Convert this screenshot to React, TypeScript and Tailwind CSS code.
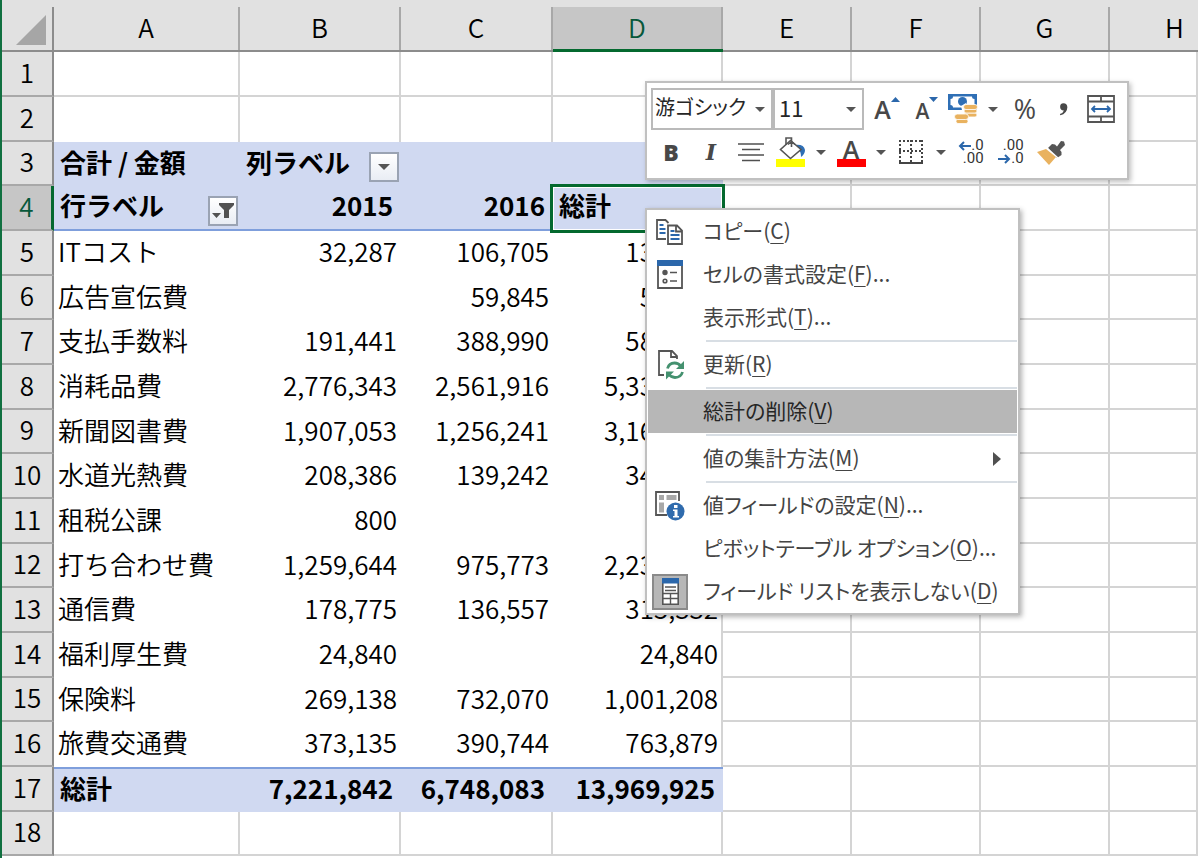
import React from "react";

type Row = { n: number; a?: string; b?: string; c?: string; d?: string; kind?: "head" | "foot" };

const rows: Row[] = [
  { n: 1 },
  { n: 2 },
  { n: 3, a: "合計 / 金額", b: "列ラベル", kind: "head" },
  { n: 4, a: "行ラベル", b: "2015", c: "2016", d: "総計", kind: "head" },
  { n: 5, a: "ITコスト", b: "32,287", c: "106,705", d: "138,992" },
  { n: 6, a: "広告宣伝費", c: "59,845", d: "59,845" },
  { n: 7, a: "支払手数料", b: "191,441", c: "388,990", d: "580,431" },
  { n: 8, a: "消耗品費", b: "2,776,343", c: "2,561,916", d: "5,338,259" },
  { n: 9, a: "新聞図書費", b: "1,907,053", c: "1,256,241", d: "3,163,294" },
  { n: 10, a: "水道光熱費", b: "208,386", c: "139,242", d: "347,628" },
  { n: 11, a: "租税公課", b: "800", d: "800" },
  { n: 12, a: "打ち合わせ費", b: "1,259,644", c: "975,773", d: "2,235,417" },
  { n: 13, a: "通信費", b: "178,775", c: "136,557", d: "315,332" },
  { n: 14, a: "福利厚生費", b: "24,840", d: "24,840" },
  { n: 15, a: "保険料", b: "269,138", c: "732,070", d: "1,001,208" },
  { n: 16, a: "旅費交通費", b: "373,135", c: "390,744", d: "763,879" },
  { n: 17, a: "総計", b: "7,221,842", c: "6,748,083", d: "13,969,925", kind: "foot" },
  { n: 18 },
];

const columns = ["A", "B", "C", "D", "E", "F", "G", "H"];

function FilterCell({ text, children }: { text: string; children: React.ReactNode }) {
  return (
    <span className="flex h-10 items-center justify-between">
      <span className="pb-[5px]">{text}</span>
      <button
        aria-label={`${text}のフィルター`}
        className="-mr-1.5 mb-[2px] flex size-[30px] items-center justify-center self-end border-2 border-[#9aa3b3] bg-gradient-to-b from-white to-[#e9edf4]"
      >
        {children}
      </button>
    </span>
  );
}

function PivotCell({ row, col }: { row: Row; col: "a" | "b" | "c" | "d" }) {
  const text = row[col];
  const blank = row.n < 3 || row.n > 17;
  const left = col === "a" || row.n === 3 || (row.n === 4 && col === "d");
  const selected = row.n === 4 && col === "d";
  const columnFilter = row.n === 3 && col === "b";
  const rowFilter = row.n === 4 && col === "a";
  let style = "whitespace-nowrap pt-0 ";
  style += columnFilter || rowFilter ? "pb-0 " : "pb-[5px] ";
  if (blank) style += row.n === 2 ? "border-r-2 border-[#d4d4d4] " : "border-r-2 border-b-2 border-[#d4d4d4] ";
  else if (row.kind) style += "bg-[#d0d9f1] font-bold ";
  else if (col === "d") style += "border-r-2 border-[#d4d4d4] ";
  if (row.n === 4) style += "border-b-2 border-b-[#7f9fdc] ";
  if (row.n === 17) style += "border-t-2 border-t-[#7f9fdc] ";
  style += left ? "text-left " : "text-right ";
  style += row.kind ? "pl-1.5 pr-2 " : col === "d" ? "pl-1 pr-[3px] " : "px-1 ";
  if (selected) style += "relative ";
  return (
    <td className={style}>
      {selected && (
        <span className="absolute -top-[2px] -right-[2px] -bottom-[4px] -left-[3px] border-[3px] border-[#04692f] outline-1 -outline-offset-4 outline-white" />
      )}
      {columnFilter && (
        <FilterCell text="列ラベル">
          <Caret size={12} />
        </FilterCell>
      )}
      {rowFilter && (
        <FilterCell text="行ラベル">
          <svg width="22" height="18" viewBox="0 0 22 18" fill="#525252">
            <path d="M7 1h15v2l-5 5v8h-5V8L7 3zM0 11h9l-4.500 5z" />
          </svg>
        </FilterCell>
      )}
      {!columnFilter && !rowFilter && text}
    </td>
  );
}

function Caret({ size = 10 }: { size?: number }) {
  return (
    <svg width={size} height={size / 2} viewBox="0 0 10 5" fill="#555">
      <path d="M0 0h10L5 5z" />
    </svg>
  );
}

function Sheet() {
  return (
    <table className="w-full table-fixed border-separate border-spacing-0 text-[26px] leading-9 font-[350] text-black">
      <colgroup>
        <col className="w-[52px]" />
        <col className="w-[186px]" />
        <col className="w-[161px]" />
        <col className="w-[152px]" />
        <col className="w-[170px]" />
        <col className="w-[129px]" />
        <col className="w-[129px]" />
        <col className="w-[129px]" />
        <col />
      </colgroup>
      <thead>
        <tr className="h-[52px] bg-[#e1e1e1]">
          <th className="border-b-2 border-[#8c8c8c] p-0 pt-[7px]">
            <div className="flex h-[43px] justify-end border-r-2 border-[#8c8c8c] pt-2 pr-1.5">
              <svg width="30" height="30" viewBox="0 0 30 30">
                <path d="M30 0v30H0z" fill="#a6a6a6" />
              </svg>
            </div>
          </th>
          {columns.map((c) => (
            <th
              key={c}
              scope="col"
              className={
                c === "D"
                  ? "border-b-[3px] border-[#04692f] p-0 pt-[7px] font-[350] text-[#07583a]"
                  : "border-b-2 border-[#8c8c8c] p-0 pt-[7px] font-[350]"
              }
            >
              <div
                className={
                  c === "D"
                    ? "flex h-[42px] items-center justify-center border-r-2 border-[#a8a8a8] bg-[#c6c6c6] pb-[3px]"
                    : c === "H"
                      ? "flex h-[43px] items-center overflow-hidden pb-1 pl-[55px]"
                      : "flex h-[43px] items-center justify-center border-r-2 border-[#a8a8a8] pb-1"
                }
              >
                {c}
              </div>
            </th>
          ))}
        </tr>
      </thead>
      <tbody className="[&>tr]:h-[45px] [&>tr:nth-child(3n)]:h-[44px]">
        {rows.map((row) => (
          <tr key={row.n}>
            <th
              scope="row"
              className={
                row.n === 4
                  ? "border-r-[3px] border-b-2 border-r-[#04692f] border-b-[#a8a8a8] bg-[#c6c6c6] p-0 pb-1 font-[350] text-[#07583a]"
                  : "border-r-2 border-b-2 border-r-[#8c8c8c] border-b-[#a8a8a8] bg-[#e1e1e1] p-0 pb-1 font-[350]"
              }
            >
              {row.n}
            </th>
            <PivotCell row={row} col="a" />
            <PivotCell row={row} col="b" />
            <PivotCell row={row} col="c" />
            <PivotCell row={row} col="d" />
            {["E", "F", "G", "H"].map((c) => (
              <td key={c} className="border-r-2 border-b-2 border-[#d4d4d4] p-0" />
            ))}
          </tr>
        ))}
      </tbody>
    </table>
  );
}

function ToolButton({ label, width = "w-10", children }: { label: string; width?: string; children: React.ReactNode }) {
  return (
    <button aria-label={label} className={`flex h-10 shrink-0 items-center justify-center text-[#484848] ${width}`}>
      {children}
    </button>
  );
}

function MiniToolbar() {
  return (
    <div
      role="toolbar"
      aria-label="ミニ ツールバー"
      className="absolute top-[81px] left-[645px] border-2 border-[#c0c0c0] bg-white pt-[5px] pr-2 pb-1.5 pl-1 shadow-[2px_2px_5px_rgba(0,0,0,0.25)]"
    >
      <div className="flex items-center">
        <label className="relative flex items-center">
          <select aria-label="フォント" className="h-[42px] w-[122px] appearance-none border-2 border-[#bababa] bg-white pb-1 pl-[2px] text-[20px] text-[#262626] [font-feature-settings:'palt']">
            <option>游ゴシック</option>
          </select>
          <span className="pointer-events-none absolute right-2"><Caret /></span>
        </label>
        <label className="relative mr-[3px] flex items-center">
          <select aria-label="フォント サイズ" className="h-[42px] w-[91px] appearance-none border-2 border-[#bababa] bg-white pb-1 pl-1 text-[22px] text-[#262626]">
            <option>11</option>
          </select>
          <span className="pointer-events-none absolute right-2"><Caret /></span>
        </label>
        <ToolButton label="フォント サイズの拡大">
          <span className="font-['Open_Sans'] text-[25px] leading-8 font-semibold">A</span>
          <svg className="mb-5" width="9" height="5" viewBox="0 0 9 5" fill="#2b67ab"><path d="M0 5h9L4.500 0z" /></svg>
        </ToolButton>
        <ToolButton label="フォント サイズの縮小">
          <span className="pt-1 font-['Open_Sans'] text-[21px] leading-8 font-semibold">A</span>
          <svg className="mb-5" width="9" height="5" viewBox="0 0 9 5" fill="#2b67ab"><path d="M0 0h9L4.500 5z" /></svg>
        </ToolButton>
        <ToolButton label="通貨表示形式" width="w-8">
          <svg width="30" height="30" viewBox="0 0 30 30">
            <path d="M0 0h29v16H0z" fill="#2f6fb5" />
            <path d="M5 2.500h19q0 2.500 2.500 2.500v6H18v2.500H5Q5 11 2.500 11V5Q5 5 5 2.500z" fill="#fff" />
            <circle cx="14.500" cy="7.500" r="4.500" fill="#2f6fb5" />
            <path d="M13 12l5-3v7h-4z" fill="#fff" />
            <g fill="#e9b25f" stroke="#fff" strokeWidth=".8">
              <rect x="16" y="19" width="13" height="4" rx="2" />
              <rect x="16" y="15" width="13" height="4" rx="2" />
              <rect x="15.500" y="10.500" width="14" height="5" rx="2.500" />
              <rect x="8" y="25" width="12" height="4.500" rx="2" />
              <rect x="6.500" y="20" width="14" height="5.500" rx="2.700" />
            </g>
          </svg>
        </ToolButton>
        <ToolButton label="通貨の一覧" width="w-7"><Caret /></ToolButton>
        <ToolButton label="パーセント スタイル" width="w-9">
          <span className="font-['Open_Sans'] text-[27px] leading-8 font-medium">%</span>
        </ToolButton>
        <ToolButton label="桁区切りスタイル">
          <svg width="9" height="13" viewBox="0 0 10 14" fill="#484848">
            <path d="M5 0a4 4 0 1 0 .5 8Q4.500 11 1 12l.5 1.500Q9 11.500 9.300 4.500 9 0 5 0z" />
          </svg>
        </ToolButton>
        <ToolButton label="セルを結合して中央揃え" width="w-9">
          <svg width="28" height="28" viewBox="0 0 28 28" fill="none" stroke="#555" strokeWidth="1.800">
            <path d="M1 1h26v26H1zM1 6.500h26M1 21.500h26M14 1v5.500M14 21.500V27" />
            <path d="M5 14h18M8 11l-3 3 3 3M20 11l3 3-3 3" stroke="#2b67ab" />
          </svg>
        </ToolButton>
      </div>
      <div className="mt-[2px] flex items-center">
        <ToolButton label="太字"><span className="font-['Open_Sans'] text-[23px] leading-8 font-extrabold">B</span></ToolButton>
        <ToolButton label="斜体"><span className="font-['DejaVu_Serif'] text-[22px] leading-8 font-bold italic">I</span></ToolButton>
        <ToolButton label="中央揃え">
          <svg width="26" height="20" viewBox="0 0 26 20" stroke="#505050" strokeWidth="1.600"><path d="M0 2h26M4 7.500h18M0 13h26M4 18.500h18" /></svg>
        </ToolButton>
        <ToolButton label="塗りつぶしの色">
          <svg width="30" height="30" viewBox="0 0 30 30">
            <path d="M0 22h29v8H0z" fill="#ff0" />
            <path d="M19 8q9-1 10 5 0 4-4 7 0-5-2-7z" fill="#2f6fb5" />
            <path d="M14.500 3.500L25 12.500 14.500 21.500 4.500 12.500z" fill="#fff" stroke="#555" strokeWidth="1.600" />
            <path d="M10 8V1h5.500v9M12 7.500l3.500-3 3.500 3" fill="none" stroke="#555" strokeWidth="1.600" />
          </svg>
        </ToolButton>
        <ToolButton label="塗りつぶしの色の一覧" width="w-5"><Caret /></ToolButton>
        <ToolButton label="フォントの色">
          <span className="flex flex-col items-center pt-[3px]">
            <span className="font-['Open_Sans'] text-[25px] leading-[18px] font-semibold">A</span>
            <span className="mt-[1px] h-2 w-[29px] bg-[#f00]" />
          </span>
        </ToolButton>
        <ToolButton label="フォントの色の一覧" width="w-5"><Caret /></ToolButton>
        <ToolButton label="罫線">
          <svg width="24" height="24" viewBox="0 0 24 24" fill="none" stroke="#444" strokeWidth="2">
            <path d="M0 1h24M0 11h24M1 0v22M12 0v22M23 0v22" strokeDasharray="2 2" />
            <path d="M0 23h24" />
          </svg>
        </ToolButton>
        <ToolButton label="罫線の一覧" width="w-5"><Caret /></ToolButton>
        <ToolButton label="小数点以下の表示桁数を増やす">
          <span className="flex flex-col items-end font-[Roboto] text-[15px] leading-[13px] text-[#333]">
            <span className="flex items-center">
              <svg width="13" height="10" viewBox="0 0 13 10" fill="none" stroke="#2b67ab" strokeWidth="2"><path d="M13 5H2M6 1L2 5l4 4" /></svg>.0
            </span>
            <span>.00</span>
          </span>
        </ToolButton>
        <ToolButton label="小数点以下の表示桁数を減らす">
          <span className="flex flex-col items-end font-[Roboto] text-[15px] leading-[13px] text-[#333]">
            <span>.00</span>
            <span className="flex items-center">
              <svg width="13" height="10" viewBox="0 0 13 10" fill="none" stroke="#2b67ab" strokeWidth="2"><path d="M0 5h11M7 1l4 4-4 4" /></svg>.0
            </span>
          </span>
        </ToolButton>
        <ToolButton label="書式のコピー/貼り付け">
          <svg width="28" height="25" viewBox="0 0 28 25">
            <path d="M0 12l9-3 10 8-7 8z" fill="#e9b25f" />
            <path d="M11 8l4-4 3 .5 2 2L24 1l3 .5 1 3.500-5 5 1.500 2v3L20 18z" fill="#555" />
            <path d="M10 8l11 10" stroke="#fff" strokeWidth="1.200" />
          </svg>
        </ToolButton>
      </div>
    </div>
  );
}

function CopyIcon() {
  return (
    <svg width="28" height="26" viewBox="0 0 28 26" fill="none" stroke="#555" strokeWidth="1.800">
      <path d="M10 20H1V1h8.500l3 3" />
      <path d="M3.500 6h4M3.500 10h6M3.500 14h6" stroke="#2b67ab" />
      <path d="M12 6.500h9l5 5V25H12zM20 6.500v6h6" fill="#fff" />
      <path d="M14.500 12h4M14.500 16h9M14.500 20h9" stroke="#2b67ab" />
    </svg>
  );
}

function FormatIcon() {
  return (
    <svg width="26" height="30" viewBox="0 0 26 30" fill="none" stroke="#555" strokeWidth="1.800">
      <path d="M1 2h24v26H1z" />
      <path d="M0 0h26v6H0z" fill="#2b67ab" stroke="none" />
      <circle cx="8" cy="12.500" r="1.800" fill="#555" />
      <circle cx="8" cy="21" r="1.800" strokeWidth="1.600" />
      <path d="M13 12.500h7M13 21h7" strokeWidth="1.600" />
    </svg>
  );
}

function RefreshIcon() {
  return (
    <svg width="28" height="30" viewBox="0 0 28 30" fill="none" stroke="#555" strokeWidth="1.800">
      <path d="M8 25H3V1h13l5 5v3M15 1v6h6" />
      <path d="M11.500 18.500q1.500-5.500 7-5.500 4 0 6 3M26.500 22q-1.500 5.500-7.500 5.500-4 0-6.500-3.500" stroke="#44916f" strokeWidth="2.800" />
      <path d="M28 11v8h-8zM10 29.500V21.500H18z" fill="#44916f" stroke="none" />
    </svg>
  );
}

function FieldIcon() {
  return (
    <svg width="30" height="30" viewBox="0 0 30 30">
      <path d="M12 24H1V1h23v9" fill="none" stroke="#555" strokeWidth="1.800" />
      <path d="M4 4h5v5H4zM11.500 4h10v5h-10zM4 11.500h5v10H4z" fill="#a8a8a8" />
      <circle cx="20.500" cy="20.500" r="9" fill="#2f6bad" />
      <path d="M19 14h3.500v3H19zM18 18.500h4.500V25H24v1.500h-6V25h1.500v-5H18z" fill="#fff" />
    </svg>
  );
}

function ListIcon() {
  return (
    <span className="flex size-9 items-center justify-center border-2 border-[#8a8a8a] bg-[#b7b7b7]">
      <svg width="17" height="27" viewBox="0 0 17 27">
        <path d="M.8.8h15.400v25.400H.8z" fill="#fff" stroke="#555" strokeWidth="1.600" />
        <path d="M0 0h17v5.500H0z" fill="#2b67ab" />
        <path d="M3 9h11M3 12.500h11M1 15.500h15M1 20.500h15M8.500 15.500V26" stroke="#555" strokeWidth="1.400" />
      </svg>
    </span>
  );
}

type Item = { text: string; k: string; tail?: string; icon?: React.ReactNode; active?: boolean; sub?: boolean; sep?: boolean };

const items: Item[] = [
  { text: "コピー", k: "C", icon: <CopyIcon /> },
  { text: "セルの書式設定", k: "F", tail: "...", icon: <FormatIcon /> },
  { text: "表示形式", k: "T", tail: "..." },
  { text: "更新", k: "R", icon: <RefreshIcon />, sep: true },
  { text: "総計の削除", k: "V", active: true, sep: true },
  { text: "値の集計方法", k: "M", sub: true, sep: true },
  { text: "値フィールドの設定", k: "N", tail: "...", icon: <FieldIcon />, sep: true },
  { text: "ピボットテーブル オプション", k: "O", tail: "..." },
  { text: "フィールド リストを表示しない", k: "D", icon: <ListIcon /> },
];

function ContextMenu() {
  return (
    <div
      role="menu"
      className="absolute top-[208px] left-[645px] flex w-[375px] flex-col border-2 border-[#c0c0c0] bg-white px-[1px] shadow-[2px_2px_5px_rgba(0,0,0,0.3)]"
    >
      {items.map((it) => (
        <React.Fragment key={it.k}>
          {it.sep && (
            <div role="separator" className="py-[1px] pl-[58px]">
              <div className="h-[2px] bg-[#d8dee4]" />
            </div>
          )}
          <button
            role="menuitem"
            className={`flex h-[43px] items-center text-left text-[21px] whitespace-nowrap [font-feature-settings:'palt'] ${
              it.active ? "bg-[#b7b7b7] text-[#262626]" : "text-[#444]"
            }`}
          >
            <span className="flex w-[55px] shrink-0 items-center pl-1">
              <span className="flex w-9 justify-center">{it.icon}</span>
            </span>
            <span className="flex-1 pb-[1px]">
              {it.text}(<span className="underline decoration-1 underline-offset-4">{it.k}</span>){it.tail}
            </span>
            {it.sub && (
              <svg className="mr-4" width="8" height="14" viewBox="0 0 8 14" fill="#505050"><path d="M0 0l8 7-8 7z" /></svg>
            )}
          </button>
        </React.Fragment>
      ))}
    </div>
  );
}

export default function App() {
  return (
    <main className="relative min-h-screen overflow-hidden border-l-2 border-[#107040] bg-white font-['Noto_Sans_CJK_JP',sans-serif]">
      <Sheet />
      <div className="absolute inset-0 -left-[2px]">
        <MiniToolbar />
        <ContextMenu />
      </div>
    </main>
  );
}
